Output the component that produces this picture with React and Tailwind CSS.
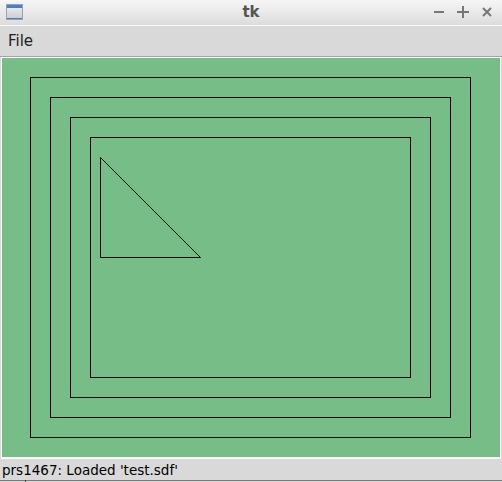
import React from "react";

// rectangles drawn on the canvas, in canvas pixels
const rects = [
  { x: 28, y: 19, w: 440, h: 360 },
  { x: 48, y: 39, w: 400, h: 320 },
  { x: 68, y: 59, w: 360, h: 280 },
  { x: 88, y: 79, w: 320, h: 240 },
];

const TitleBar = () => (
  <div className="relative flex h-[26px] items-center justify-center bg-gradient-to-b from-[#f6f6f6] to-[#dcdcdc] border-b border-[#fafafa]">
    <div className="absolute left-[6px] top-[4px] flex h-[16px] w-[17px] flex-col border border-[#9aa3ad] bg-gradient-to-b from-[#eef0f2] to-[#c9ccd0]">
      <div className="h-[3px] bg-[#4a7fc7]" />
      <div className="flex-1" />
      <div className="h-[1px] bg-[#4a7fc7]" />
    </div>
    <span className="text-[15px] font-bold text-[#555555] [font-family:'DejaVu_Sans',sans-serif] leading-none">
      tk
    </span>
    <div className="absolute right-[8px] top-[5px] flex items-center gap-[10px] text-[#777777]">
      <svg width="14" height="14" viewBox="0 0 14 14">
        <rect x="2" y="6" width="10" height="2" fill="currentColor" />
      </svg>
      <svg width="14" height="14" viewBox="0 0 14 14">
        <rect x="1" y="6" width="12" height="2" fill="currentColor" />
        <rect x="6" y="1" width="2" height="12" fill="currentColor" />
      </svg>
      <svg width="14" height="14" viewBox="0 0 14 14">
        <path d="M3 3 L11 11 M11 3 L3 11" stroke="currentColor" strokeWidth="2" />
      </svg>
    </div>
  </div>
);

const Canvas = () => (
  <div className="mx-[1px] border-t border-x border-b-2 border-white">
    <div className="h-[399px] bg-[#77bd87]">
      <svg width="498" height="399" className="block">
        {rects.map((r, i) => (
          <rect
            key={i}
            x={r.x + 0.5}
            y={r.y + 0.5}
            width={r.w}
            height={r.h}
            fill="none"
            stroke="#000"
            strokeWidth="1"
            shapeRendering="crispEdges"
          />
        ))}
        <polygon
          points="98.5,99.5 98.5,199.5 198.5,199.5"
          fill="none"
          stroke="#000"
          strokeWidth="1"
        />
      </svg>
    </div>
  </div>
);

export default function App() {
  return (
    <div className="h-[482px] w-[502px] overflow-hidden bg-[#d9d9d9] [font-family:'DejaVu_Sans',sans-serif]">
      <TitleBar />
      <div className="flex h-[31px] items-center border-b border-[#a3a3a3] px-[8px]">
        <span className="text-[15px] text-[#222222]">File</span>
      </div>
      <Canvas />
      <div className="relative h-[22px] border-b border-[#7a7a7a]">
        <span className="absolute left-[2px] top-[2px] text-[13.5px] leading-[18px] text-black">
          prs1467: Loaded 'test.sdf'
        </span>
        <div className="absolute left-[25px] bottom-[-2px] h-[2px] w-[1px] bg-[#444]" />
      </div>
    </div>
  );
}
